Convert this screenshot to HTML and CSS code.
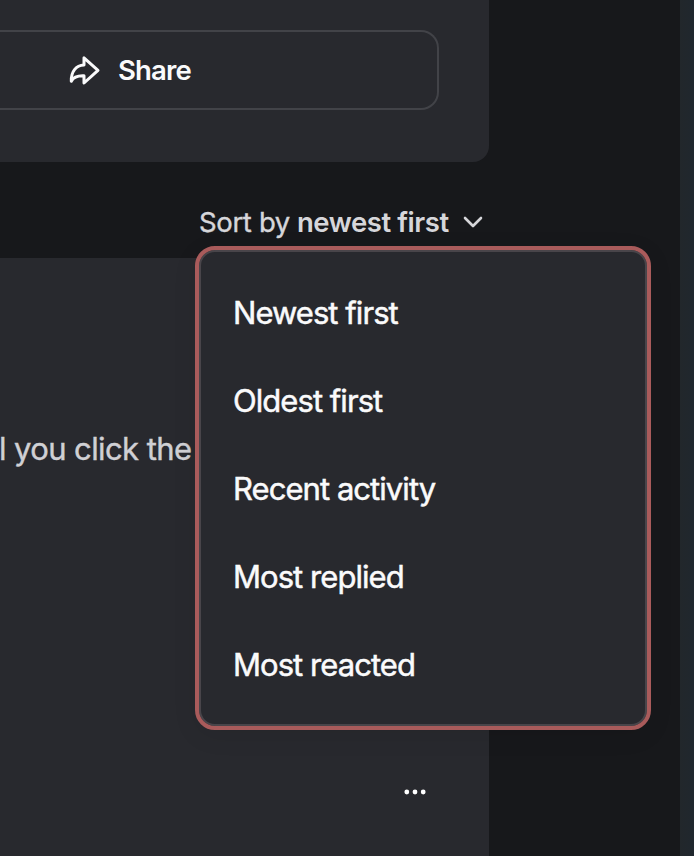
FILE: index.html
```
<!DOCTYPE html>
<html lang="en">
<head>
    <meta charset="UTF-8">
    <title>Comments</title>
    <link rel="stylesheet" href="styles.css">
</head>
<body>
<div class="page">
    <div class="feed">
        <div class="card post">
            <button class="share">
                <svg class="share-icon" width="34" height="32" viewBox="0 0 34 32">
                    <path d="M16 3.8 30 16.3 16 29V21.8C10 21.5 5.5 23 3.3 27.2 3 17.5 8 11.3 16 11Z"/>
                </svg>
                <span>Share</span>
            </button>
        </div>
        <div class="sort">
            <button class="sort-button">
                <span class="sort-label">Sort by</span>
                <span class="sort-value">newest first</span>
                <svg class="chevron" width="20" height="12" viewBox="0 0 20 12">
                    <path d="M2 2 10 10 18 2"/>
                </svg>
            </button>
            <ul class="menu">
                <li>Newest first</li>
                <li>Oldest first</li>
                <li>Recent activity</li>
                <li>Most replied</li>
                <li>Most reacted</li>
            </ul>
        </div>
        <div class="card comment">
            <p class="comment-text">l you click the</p>
            <div class="more">
                <svg width="24" height="8" viewBox="0 0 24 8">
                    <circle cx="3.8" cy="4" r="2.4"/>
                    <circle cx="12" cy="4" r="2.4"/>
                    <circle cx="20.2" cy="4" r="2.4"/>
                </svg>
            </div>
        </div>
    </div>
    <div class="edge"></div>
</div>
</body>
</html>
```
FILE: styles.css
```
* {
    margin: 0;
    padding: 0;
    box-sizing: border-box;
    list-style: none;
}

body {
    background: #17181b;
    font-family: Inter, "Liberation Sans", sans-serif;
    color: #fafafb;
    overflow: hidden;
}

button {
    background: none;
    border: 0;
    color: inherit;
    font: inherit;
}

svg {
    display: block;
    fill: none;
    stroke: currentColor;
    stroke-linecap: round;
    stroke-linejoin: round;
}

.page {
    display: flex;
    justify-content: space-between;
    height: 856px;
}

.feed {
    width: 489px;
    display: flex;
    flex-direction: column;
}

.card {
    background: #28292e;
}

.post {
    height: 162px;
    padding-top: 30px;
    border-radius: 0 0 16px 0;
}

.share {
    display: flex;
    align-items: center;
    gap: 16px;
    width: 439px;
    height: 80px;
    padding-left: 68px;
    border: 2px solid #424348;
    border-left: 0;
    border-radius: 0 18px 18px 0;
    font-size: 27.5px;
    font-weight: 600;
    letter-spacing: -0.85px;
}

.share-icon {
    stroke-width: 3;
}

.sort {
    position: relative;
    height: 96px;
    padding: 42px 0 0 199px;
}

.sort-button {
    display: flex;
    align-items: center;
    height: 36px;
    font-size: 27.5px;
    color: #d6d6da;
    white-space: nowrap;
}

.sort-label {
    width: 98px;
    text-align: left;
    letter-spacing: -0.35px;
    -webkit-text-stroke: 0.4px;
}

.sort-value {
    width: 166px;
    text-align: left;
    font-weight: 600;
    letter-spacing: -0.45px;
}

.chevron {
    stroke-width: 2.6;
}

.menu {
    position: absolute;
    left: 195px;
    top: 84px;
    width: 456px;
    height: 484px;
    padding: 19px 34px;
    background: #28292e;
    border: 4px solid #a95b5b;
    border-radius: 20px;
    box-shadow: inset 0 0 0 2px #49454a, 0 6px 24px rgba(0, 0, 0, 0.08);
}

.menu li {
    height: 88px;
    line-height: 88px;
    font-size: 31px;
    letter-spacing: -0.95px;
    -webkit-text-stroke: 0.5px;
}

.comment {
    flex: 1;
    padding-top: 171px;
}

.comment-text {
    height: 40px;
    line-height: 40px;
    font-size: 31px;
    letter-spacing: -0.6px;
    text-indent: -1px;
    color: #d0d0d4;
    white-space: nowrap;
    -webkit-text-stroke: 0.4px;
}

.more {
    display: flex;
    justify-content: flex-end;
    padding: 319px 62px 0 0;
}

.more svg {
    fill: #fff;
    stroke: none;
}

.edge {
    width: 14px;
    background: linear-gradient(90deg, #22272b, #20272e);
}
```
